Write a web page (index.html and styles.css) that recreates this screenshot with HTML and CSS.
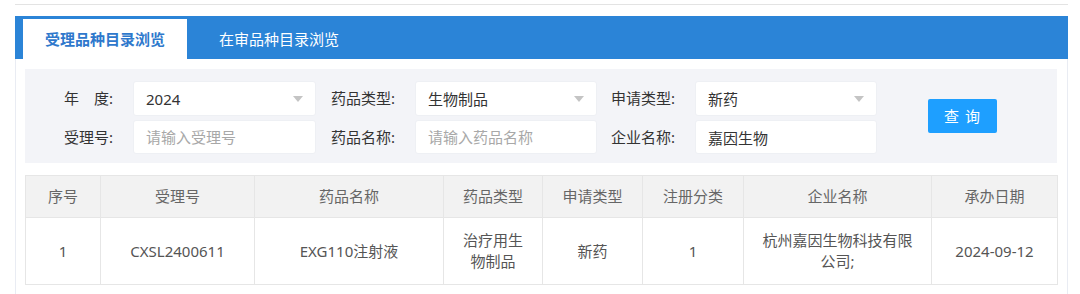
FILE: index.html
```html
<!DOCTYPE html>
<html lang="zh-CN">
<head>
<meta charset="utf-8">
<title>受理品种目录浏览</title>
<link rel="stylesheet" href="styles.css">
</head>
<body>
<div class="page">
  <div class="topline"></div>
  <div class="panel">
    <div class="tabs">
      <div class="tab active">受理品种目录浏览</div>
      <div class="tab">在审品种目录浏览</div>
    </div>
    <div class="panel-body">
      <div class="filter">
        <div class="label">年　度:</div>
        <div class="field select"><span class="val">2024</span><span class="caret"></span></div>
        <div class="label">药品类型:</div>
        <div class="field select"><span class="val">生物制品</span><span class="caret"></span></div>
        <div class="label">申请类型:</div>
        <div class="field select"><span class="val">新药</span><span class="caret"></span></div>
        <button class="btn" type="button">查 询</button>
        <div class="label">受理号:</div>
        <input class="field" type="text" placeholder="请输入受理号">
        <div class="label">药品名称:</div>
        <input class="field" type="text" placeholder="请输入药品名称">
        <div class="label">企业名称:</div>
        <input class="field" type="text" value="嘉因生物">
      </div>
      <table class="grid">
        <colgroup>
          <col class="c1"><col class="c2"><col class="c3"><col class="c4"><col class="c5"><col class="c6"><col class="c7"><col class="c8">
        </colgroup>
        <thead>
          <tr><th>序号</th><th>受理号</th><th>药品名称</th><th>药品类型</th><th>申请类型</th><th>注册分类</th><th>企业名称</th><th>承办日期</th></tr>
        </thead>
        <tbody>
          <tr><td>1</td><td>CXSL2400611</td><td>EXG110注射液</td><td>治疗用生物制品</td><td>新药</td><td>1</td><td>杭州嘉因生物科技有限公司;</td><td>2024-09-12</td></tr>
        </tbody>
      </table>
    </div>
  </div>
</div>
</body>
</html>
```

FILE: styles.css
```css
* { box-sizing: border-box; }
html, body { margin: 0; padding: 0; background: #fff; }
body {
  font-family: "Noto Sans", "Noto Sans CJK SC", sans-serif;
  font-size: 15px;
  color: #333;
  width: 1080px;
  height: 294px;
  overflow: hidden;
}
.page { padding: 4px 12px 0 15px; }
.topline { height: 1px; background: #e3e3e3; margin-bottom: 11px; }
.panel { width: 1053px; }
.tabs {
  height: 43px;
  background: #2b84d7;
  display: flex;
  align-items: flex-end;
  padding-left: 8px;
}
.tab {
  height: 40px;
  line-height: 40px;
  color: #fff;
  padding: 0 32px;
  font-size: 15px;
  white-space: nowrap;
}
.tab.active {
  background: #fff;
  color: #2e78cc;
  font-weight: 600;
  padding: 0 22px;
}
.panel-body {
  border-left: 1px solid #e9ecf3;
  border-right: 1px solid #e9ecf3;
  padding: 10px 10px 20px 9px;
  min-height: 240px;
}
.filter {
  background: #f3f4f8;
  height: 94px;
  padding: 12px 0 0 21px;
  display: grid;
  grid-template-columns: 87px 183px 99px 182px 98px 182px 130px;
  grid-template-rows: 35px 34px;
  row-gap: 4px;
}
.label {
  text-align: right;
  padding-right: 20px;
  line-height: 35px;
  color: #333;
  white-space: nowrap;
}
.field {
  background: #fff;
  border: 1px solid #eef0f4;
  border-radius: 3px;
  font: inherit;
  color: #333;
  padding: 0 12px;
  height: 100%;
  width: 100%;
  outline: none;
}
.field::placeholder { color: #a8a8a8; }
.select { display: flex; align-items: center; }
.select .val { flex: 1; }
.caret {
  width: 0; height: 0;
  border-left: 5px solid transparent;
  border-right: 5px solid transparent;
  border-top: 6px solid #c4c4c4;
  margin-right: 0;
}
.btn {
  grid-column: 7;
  grid-row: 1 / 3;
  align-self: center;
  justify-self: start;
  margin-left: 51px;
  margin-top: -4px;
  width: 69px;
  height: 34px;
  background: #1e9fff;
  color: #fff;
  border: none;
  border-radius: 2px;
  font: inherit;
  font-size: 15px;
  letter-spacing: 1px;
}
.grid {
  margin-top: 12px;
  width: 1032px;
  border-collapse: collapse;
  table-layout: fixed;
  color: #555;
}
.grid col.c1 { width: 75px; }
.grid col.c2 { width: 154px; }
.grid col.c3 { width: 189px; }
.grid col.c4 { width: 99px; }
.grid col.c5 { width: 100px; }
.grid col.c6 { width: 101px; }
.grid col.c7 { width: 188px; }
.grid col.c8 { width: 126px; }
.grid th, .grid td {
  border: 1px solid #e6e6e6;
  text-align: center;
  font-weight: normal;
  padding: 0 15px;
  line-height: 21px;
}
.grid th { background: #f2f2f2; height: 42px; color: #666; }
.grid td { height: 67px; }
```
